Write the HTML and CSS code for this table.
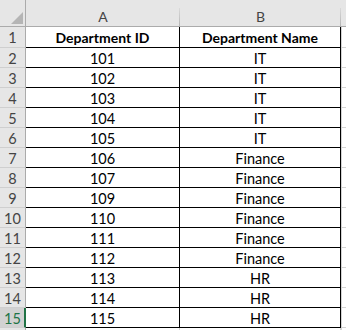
FILE: index.html
```html
<!DOCTYPE html>
<html>
<head>
<meta charset="utf-8">
<link rel="stylesheet" href="styles.css">
</head>
<body>
<div class="sheet">
  <div class="corner"><svg width="25" height="26" viewBox="0 0 25 26"><polygon points="11,24 23,24 23,12" fill="#b5b5b5"/></svg></div>
  <div class="colhead">A</div>
  <div class="colhead">B</div>
  <div class="colhead blank"></div>

  <div class="rowhead">1</div><div class="cell a bold">Department ID</div><div class="cell b bold">Department Name</div><div class="fill"></div>
  <div class="rowhead">2</div><div class="cell a">101</div><div class="cell b">IT</div><div class="fill"></div>
  <div class="rowhead">3</div><div class="cell a">102</div><div class="cell b">IT</div><div class="fill"></div>
  <div class="rowhead">4</div><div class="cell a">103</div><div class="cell b">IT</div><div class="fill"></div>
  <div class="rowhead">5</div><div class="cell a">104</div><div class="cell b">IT</div><div class="fill"></div>
  <div class="rowhead">6</div><div class="cell a">105</div><div class="cell b">IT</div><div class="fill"></div>
  <div class="rowhead">7</div><div class="cell a">106</div><div class="cell b">Finance</div><div class="fill"></div>
  <div class="rowhead">8</div><div class="cell a">107</div><div class="cell b">Finance</div><div class="fill"></div>
  <div class="rowhead">9</div><div class="cell a">109</div><div class="cell b">Finance</div><div class="fill"></div>
  <div class="rowhead">10</div><div class="cell a">110</div><div class="cell b">Finance</div><div class="fill"></div>
  <div class="rowhead">11</div><div class="cell a">111</div><div class="cell b">Finance</div><div class="fill"></div>
  <div class="rowhead">12</div><div class="cell a">112</div><div class="cell b">Finance</div><div class="fill"></div>
  <div class="rowhead">13</div><div class="cell a">113</div><div class="cell b">HR</div><div class="fill"></div>
  <div class="rowhead">14</div><div class="cell a">114</div><div class="cell b">HR</div><div class="fill"></div>
  <div class="rowhead selected">15</div><div class="cell a">115</div><div class="cell b">HR</div><div class="fill"></div>

  <div class="rowhead tail"></div><div class="tailcell"></div><div class="tailcell"></div><div class="fill tailfill"></div>
</div>
</body>
</html>
```

FILE: styles.css
```css
html, body {
  margin: 0;
  padding: 0;
  background: #ffffff;
}

.sheet {
  display: grid;
  grid-template-columns: 26px 154px 161px 5px;
  grid-template-rows: 27px 21px repeat(14, 20px) 3px;
  width: 346px;
  height: 330px;
  overflow: hidden;
  font-family: "Lato", "Liberation Sans", sans-serif;
  font-size: 14.5px;
  color: #000;
}

.corner {
  background: #e6e6e6;
  border-right: 1px solid #ababab;
  border-bottom: 1px solid #ababab;
  box-sizing: border-box;
  display: flex;
}

.colhead {
  background: #e6e6e6;
  border-bottom: 1px solid #ababab;
  box-sizing: border-box;
  display: flex;
  justify-content: center;
  align-items: flex-start;
  padding-top: 8px;
  font-size: 14px;
  line-height: 17px;
  color: #444;
  position: relative;
}

.colhead::after {
  content: "";
  position: absolute;
  right: 0;
  top: 8px;
  bottom: 0;
  width: 1px;
  background: linear-gradient(to bottom, #dadada, #b4b4b4);
}

.colhead.blank::after {
  display: none;
}

.rowhead {
  background: #e6e6e6;
  border-right: 1px solid #ababab;
  border-bottom: 1px solid #cfcfcf;
  box-sizing: border-box;
  display: flex;
  justify-content: center;
  padding-top: 2px;
  line-height: 17px;
  font-size: 14.5px;
  color: #444;
}

.rowhead.selected {
  background: #d2d2d2;
  border-right: 2px solid #217346;
  color: #217346;
  padding-left: 1px;
}

.rowhead.tail {
  border-bottom: none;
  padding: 0;
}

.cell {
  border-right: 1px solid #000;
  border-bottom: 1px solid #000;
  box-sizing: border-box;
  display: flex;
  justify-content: center;
  padding-top: 2px;
  line-height: 17px;
  white-space: nowrap;
}

.bold {
  font-weight: 700;
  font-size: 14px;
}

.fill {
  border-left: 1px solid #d4d4d4;
  border-bottom: 1px solid #d4d4d4;
  box-sizing: border-box;
}

.tailcell {
  border-right: 1px solid #d4d4d4;
  box-sizing: border-box;
}

.tailfill {
  border-bottom: none;
}
```
